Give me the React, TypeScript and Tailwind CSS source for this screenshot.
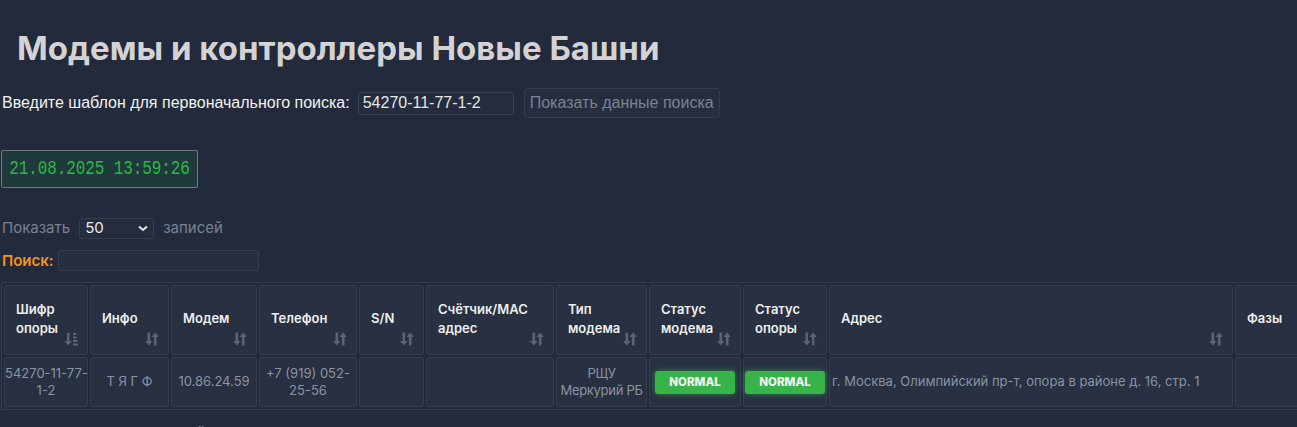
import React from "react";

const SortIcon = ({ active = false }: { active?: boolean }) =>
  active ? (
    <svg width="14" height="14" viewBox="0 0 14 14" className="text-[#5b6374]">
      <path d="M3 1h2.4v8H8L4.2 13.5 0.4 9H3z" fill="currentColor" />
      <rect x="9" y="1" width="3" height="2" fill="currentColor" />
      <rect x="9" y="4.5" width="3.6" height="2" fill="currentColor" />
      <rect x="9" y="8" width="4.3" height="2" fill="currentColor" />
      <rect x="9" y="11.5" width="5" height="2" fill="currentColor" />
    </svg>
  ) : (
    <svg width="14" height="14" viewBox="0 0 14 14" className="text-[#5b6374]">
      <path d="M2.5 0.5h2.6v8.5h2.4L3.8 13.5 0.1 9h2.4z" fill="currentColor" />
      <path d="M8.9 13.5h2.6V5h2.4L10.2 0.5 6.5 5h2.4z" fill="currentColor" />
    </svg>
  );

type Col = { title: React.ReactNode; w: string; active?: boolean };

const columns: Col[] = [
  { title: <>Шифр<br />опоры</>, w: "w-[84px]", active: true },
  { title: "Инфо", w: "w-[79px]" },
  { title: "Модем", w: "w-[86px]" },
  { title: "Телефон", w: "w-[98px]" },
  { title: "S/N", w: "w-[65px]" },
  { title: <>Счётчик/MAC<br />адрес</>, w: "w-[128px]" },
  { title: <>Тип<br />модема</>, w: "w-[91px]" },
  { title: <>Статус<br />модема</>, w: "w-[92px]" },
  { title: <>Статус<br />опоры</>, w: "w-[84px]" },
  { title: "Адрес", w: "w-[404px]" },
  { title: "Фазы", w: "w-[90px]" },
];

const Badge = () => (
  <span className="inline-block rounded-[3px] bg-[#37b34a] px-[14px] py-[5px] text-[11.5px] font-extrabold leading-[13px] text-[#f4f4f4] shadow-[0_0_6px_rgba(60,200,80,0.55)]">
    NORMAL
  </span>
);

export default function App() {
  const cell = "border border-[#353d4f] rounded-[3px] bg-[#283041]";
  return (
    <div className="h-screen w-full overflow-hidden bg-[#232a3b] font-['Inter','Noto_Sans',sans-serif]">
      <h1 className="pl-[17px] pt-[28px] text-[33px] font-bold leading-[40px] text-[#d3d3d5]">
        Модемы и контроллеры Новые Башни
      </h1>

      <div className="mt-[20px] flex items-center pl-[2px] font-['Liberation_Sans',sans-serif] text-[16px]">
        <span className="text-[#f2f2f2]">Введите шаблон для первоначального поиска:</span>
        <input
          defaultValue="54270-11-77-1-2"
          className="ml-[8px] h-[23px] w-[156px] rounded-[3px] border border-[#3a4254] bg-[#252c3d] px-[4px] text-[16px] text-[#e6e6e6] outline-none"
        />
        <button className="ml-[10px] h-[30px] w-[196px] rounded-[4px] border border-[#353d50] bg-[#262d3e] text-[16px] text-[#7b8290]">
          Показать данные поиска
        </button>
      </div>

      <div className="ml-[1px] mt-[32px] flex h-[38px] w-[197px] items-center justify-center rounded-[2px] border border-[#6f7781] bg-[#1f3a3b]">
        <span className="inline-block scale-y-[1.3] font-['Liberation_Mono',monospace] text-[16px] tracking-[-0.1px] text-[#2fb548]">
          21.08.2025 13:59:26
        </span>
      </div>

      <div className="mt-[29px] flex items-center pl-[2px] text-[15px] text-[#7b8292]">
        <span>Показать</span>
        <div className="ml-[9px] flex h-[21px] w-[75px] items-center justify-between rounded-[3px] border border-[#353d4f] bg-[#252c3d] px-[5px]">
          <span className="text-[#eaeaea]">50</span>
          <svg width="10" height="7" viewBox="0 0 10 7">
            <path d="M1 1.5l4 3.5 4-3.5" stroke="#e6e6e6" strokeWidth="2" fill="none" />
          </svg>
        </div>
        <span className="ml-[9px]">записей</span>
      </div>

      <div className="mt-[10px] flex items-center pl-[2px] text-[15px]">
        <span className="font-semibold text-[#f7921e]">Поиск:</span>
        <input className="ml-[4px] h-[21px] w-[201px] rounded-[3px] border border-[#353d4f] bg-[#262e3f] outline-none" />
      </div>

      <div className="ml-[1px] mt-[10px] w-[1400px] rounded-[2px] border border-r-0 border-[#343c4e]">
        <table className="w-[1325px] table-fixed border-separate border-spacing-[2px] text-[13px]">
          <thead>
            <tr>
              {columns.map((c, i) => (
                <th
                  key={i}
                  className={`${cell} ${c.w} relative h-[70px] p-0 pl-[11px] pr-[28px] text-left align-middle font-semibold leading-[19px] text-[#eeeeee]`}
                >
                  <div className="-mt-[3px]">{c.title}</div>
                  <span className="absolute bottom-[8px] right-[9px] flex">
                    <SortIcon active={c.active} />
                  </span>
                </th>
              ))}
            </tr>
          </thead>
          <tbody>
            <tr className="whitespace-nowrap text-center text-[#8b93a3]">
              <td className={`${cell} h-[50px] p-0 leading-[17px]`}>54270-11-77-<br />1-2</td>
              <td className={`${cell} p-0`}>Т Я Г Ф</td>
              <td className={`${cell} p-0`}>10.86.24.59</td>
              <td className={`${cell} p-0 leading-[17px]`}>+7 (919) 052-<br />25-56</td>
              <td className={`${cell} p-0`}></td>
              <td className={`${cell} p-0`}></td>
              <td className={`${cell} p-0 leading-[17px] tracking-[-0.3px]`}>РЩУ<br />Меркурий РБ</td>
              <td className={`${cell} p-0`}><Badge /></td>
              <td className={`${cell} p-0`}><Badge /></td>
              <td className={`${cell} p-0 pl-[2px] text-left`}>г. Москва, Олимпийский пр-т, опора в районе д. 16, стр. 1</td>
              <td className={`${cell} p-0`}></td>
            </tr>
          </tbody>
        </table>
      </div>

      <div className="mt-[12px] pl-[2px] text-[15px] text-[#8b93a3]">Записи с 1 до 1 из 1 записей</div>
    </div>
  );
}
